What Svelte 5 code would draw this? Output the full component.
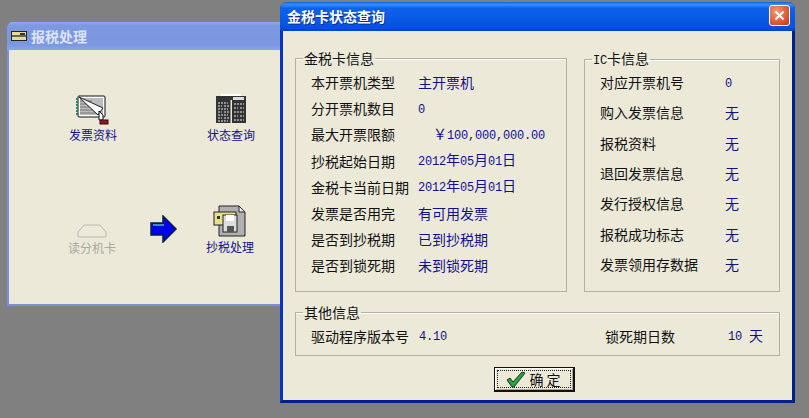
<script>
  const cardRows = [
    ['本开票机类型', '主开票机', ''],
    ['分开票机数目', '0', ''],
    ['最大开票限额', '￥100,000,000.00', 'money'],
    ['抄税起始日期', '2012年05月01日', ''],
    ['金税卡当前日期', '2012年05月01日', ''],
    ['发票是否用完', '有可用发票', ''],
    ['是否到抄税期', '已到抄税期', ''],
    ['是否到锁死期', '未到锁死期', '']
  ];
  const icRows = [
    ['对应开票机号', '0'],
    ['购入发票信息', '无'],
    ['报税资料', '无'],
    ['退回发票信息', '无'],
    ['发行授权信息', '无'],
    ['报税成功标志', '无'],
    ['发票领用存数据', '无']
  ];
  const parts = (s) => s.split(/([^\x00-\x7f]+)/).filter(Boolean);
  const isAscii = (s) => /^[\x00-\x7f]+$/.test(s);
</script>

{#snippet mixed(text)}{#each parts(text) as p}<span class:num={isAscii(p)}>{p}</span>{/each}{/snippet}

<div class="desktop">
  <section class="win back">
    <header class="back-title">
      <svg class="tico" width="16" height="10" viewBox="0 0 16 10">
        <rect x="0.5" y="0.5" width="15" height="9" fill="#e8dc90" stroke="#222"/>
        <rect x="1" y="4" width="14" height="2" fill="#666"/>
        <rect x="9" y="2" width="5" height="2" fill="#333"/>
      </svg>
      <span>报税处理</span>
    </header>
    <div class="back-body">
      <div class="tool t1">
        <svg width="34" height="30" viewBox="0 0 34 30">
          <rect x="2" y="1" width="27" height="21" rx="1" fill="#fff" stroke="#111"/>
          <rect x="4" y="3" width="23" height="17" fill="#bbb"/>
          <path d="M4 6h12M4 9h12M4 12h14M4 15h16M4 18h18" stroke="#777" stroke-width="1"/>
          <path d="M3 2L27 13L22 20Z" fill="#fff" stroke="#222"/>
          <path d="M1 3v18" stroke="#286" stroke-width="2" stroke-dasharray="2 1"/>
          <path d="M23 16l4 4v5h-4z" fill="#fff" stroke="#111"/>
          <rect x="24" y="25" width="8" height="4" fill="#8c1c24" stroke="#401"/>
        </svg>
        <span>发票资料</span>
      </div>
      <div class="tool t2">
        <svg width="32" height="30" viewBox="0 0 32 30">
          <rect x="6" y="0" width="20" height="2" fill="#fff"/>
          <rect x="1" y="2" width="30" height="27" fill="#333"/>
          <rect x="18" y="3" width="11" height="3" fill="#ddd"/>
          <rect x="15.5" y="6" width="1.5" height="23" fill="#e8e4d6"/>
          <g stroke="#eee" stroke-width="1.2" stroke-dasharray="2 1">
            <path d="M3 9h10M3 12h4M9 12h5M3 15h10M3 18h4M9 18h5M3 21h10M3 24h4M9 24h5M3 27h10"/>
            <path d="M19 10h10M19 14h4M25 14h4M19 18h10M19 22h4M25 22h4M19 26h10"/>
          </g>
        </svg>
        <span>状态查询</span>
      </div>
      <div class="tool t3 off">
        <svg width="30" height="14" viewBox="0 0 30 14">
          <path d="M1 8L7 1h16l6 7v5H1z" fill="none" stroke="#b8b8ae"/>
        </svg>
        <span>读分机卡</span>
      </div>
      <svg class="arrow" width="28" height="28" viewBox="0 0 28 28">
        <path d="M1 8h12V1l13 13-13 13v-7H1z" fill="#0000ee" stroke="#06203a" stroke-width="1.5"/>
        <path d="M3 10h11" stroke="#3a8ac8" stroke-width="2"/>
      </svg>
      <div class="tool t4">
        <svg width="34" height="32" viewBox="0 0 34 32">
          <path d="M6 1h20l6 6v24H6z" fill="#b0b0b0" stroke="#222"/>
          <path d="M26 1v6h6z" fill="#eee" stroke="#222"/>
          <rect x="1" y="7" width="22" height="13" fill="#e8e08c" stroke="#222"/>
          <rect x="4" y="11" width="3" height="3" fill="#333"/>
          <rect x="10" y="10" width="14" height="17" fill="#ddd" stroke="#222"/>
          <rect x="13" y="10" width="8" height="6" fill="#fff"/>
          <rect x="14" y="21" width="7" height="6" fill="#555"/>
        </svg>
        <span>抄税处理</span>
      </div>
    </div>
  </section>

  <section class="win front">
    <header class="front-title">
      <span>金税卡状态查询</span>
      <button class="close" aria-label="关闭">
        <svg width="11" height="11" viewBox="0 0 11 11">
          <path d="M1.5 1.5l8 8M9.5 1.5l-8 8" stroke="#fff" stroke-width="2"/>
        </svg>
      </button>
    </header>
    <div class="front-body">
      <div class="groups">
        <fieldset class="card">
          <legend>金税卡信息</legend>
          {#each cardRows as [label, value, cls]}
            <div class="row">
              <span>{label}</span><span class="val {cls}">{@render mixed(value)}</span>
            </div>
          {/each}
        </fieldset>
        <fieldset class="ic">
          <legend>{@render mixed('IC卡信息')}</legend>
          {#each icRows as [label, value]}
            <div class="row">
              <span>{label}</span><span class="val">{@render mixed(value)}</span>
            </div>
          {/each}
        </fieldset>
      </div>
      <fieldset class="other">
        <legend>其他信息</legend>
        <div class="other-row">
          <span>驱动程序版本号</span>
          <span class="val num ver">4.10</span>
          <span class="lock">锁死期日数</span>
          <span class="val num days">10</span>
          <span class="val tian">天</span>
        </div>
      </fieldset>
      <div class="actions">
        <button class="ok">
          <span class="focus">
            <svg width="20" height="17" viewBox="0 0 20 17">
              <path d="M1 9l3-2 3 4 9-10 3 1-11 14H6z" fill="#2ea043" stroke="#0c3d1a"/>
            </svg>
            <span>确 定</span>
          </span>
        </button>
      </div>
    </div>
  </section>
</div>

<style>
  :global(body) { margin: 0; }
  .desktop {
    position: relative;
    width: 809px;
    height: 418px;
    overflow: hidden;
    background: #808080;
    font: 14px/16px "Noto Sans CJK SC", "Liberation Sans", sans-serif;
    color: #111;
  }
  .win { position: absolute; box-sizing: border-box; display: flex; flex-direction: column; }

  .back {
    left: 7px; top: 22px; width: 290px; height: 284px;
    border: solid #7d8fd8;
    border-width: 0 2px 2px 2px;
    border-radius: 6px 6px 0 0;
    background: #ece9d8;
  }
  .back-title {
    height: 28px; flex: none; margin: 0 -2px;
    display: flex; align-items: center; gap: 4px; padding-left: 4px;
    border-radius: 6px 6px 0 0;
    background: linear-gradient(#94a9ec 0, #7d99e2 12%, #7b97e0 80%, #8aa4e8 100%);
    color: #dde4f6;
    font-weight: 700;
  }
  .tico { flex: none; }
  .back-body { position: relative; flex: 1; }
  .tool {
    position: absolute; width: 70px;
    display: flex; flex-direction: column; align-items: center; gap: 2px;
    color: #10108a; font-size: 12px; line-height: 15px;
  }
  .tool svg { display: block; }
  .t1 { left: 49px; top: 45px; }
  .t2 { left: 187px; top: 44px; gap: 3px; }
  .t3 { left: 48px; top: 174px; }
  .t4 { left: 186px; top: 155px; }
  .off { color: #a8a8a0; }
  .arrow { position: absolute; left: 141px; top: 165px; }

  .front {
    left: 280px; top: 2px; width: 515px; height: 401px;
    border: solid #0831c8;
    border-width: 0 3px 3px 3px;
    border-bottom-color: #00208e;
    border-right-color: #00208e;
    border-radius: 7px 7px 0 0;
    background: #ece9d8;
  }
  .front-title {
    height: 29px; flex: none; margin: 0 -3px;
    box-sizing: border-box;
    display: flex; align-items: center; justify-content: space-between;
    padding: 0 5px 2px 7px;
    border-radius: 7px 7px 0 0;
    background: linear-gradient(#0a5fe6 0, #3b8ff5 8%, #0c62e8 22%, #0758e4 70%, #0250e0 90%, #0040c8 100%);
    color: #fff;
    font-weight: 700;
    text-shadow: 1px 1px #0a2a90;
  }
  .close {
    width: 21px; height: 21px; padding: 0;
    display: grid; place-items: center;
    border: 1px solid #fff;
    border-radius: 3px;
    background: radial-gradient(circle at 35% 30%, #ef9a78, #d8502a 70%, #bf3a18);
  }

  .front-body { flex: 1; position: relative; padding: 19px 12px 0 12px; display: flex; flex-direction: column; }
  .groups { display: flex; justify-content: space-between; }

  fieldset {
    margin: 0; box-sizing: border-box;
    padding: 0 0 0 15px;
    border: 1px solid #b4b1a0;
    box-shadow: 0 1px #fff inset;
  }
  legend { padding: 0 1px; margin-left: -8px; line-height: 16px; }
  .card { width: 272px; height: 242px; padding-top: 3px; }
  .ic { width: 196px; height: 242px; padding-top: 0; }
  .ic legend { margin-bottom: -2px; }
  .card .row {
    height: 26.2px;
    display: grid; grid-template-columns: 107px 1fr; align-items: center;
  }
  .ic .row {
    height: 30.3px;
    display: grid; grid-template-columns: 125px 1fr; align-items: center;
  }
  .val { color: #10108a; }
  .num {
    font-family: "Liberation Mono", "Noto Sans CJK SC", monospace;
    font-size: 12px;
    letter-spacing: -0.2px;
  }
  .money { padding-left: 15px; }

  .other { width: 485px; height: 52px; margin-top: 12px; padding-top: 7px; }
  .other-row { display: flex; align-items: center; }
  .ver { margin-left: 10px; padding-top: 2px; }
  .lock { margin-left: 158px; }
  .days { margin-left: 53px; padding-top: 2px; }
  .tian { margin-left: 7px; margin-top: -3px; }

  .actions { display: flex; justify-content: center; margin-top: 11px; padding-right: 7px; }
  .ok {
    width: 81px; height: 25px; padding: 2px; box-sizing: border-box;
    border: 1px solid #111;
    border-right-width: 2px; border-bottom-width: 2px;
    background: #ece9d8;
    font: inherit; color: #111;
    box-shadow: inset 1px 1px #fff, inset -1px -1px #aca899;
  }
  .focus {
    height: 100%; box-sizing: border-box;
    display: flex; align-items: center; justify-content: center; gap: 3px;
    border: 1px dotted #222;
  }
</style>
